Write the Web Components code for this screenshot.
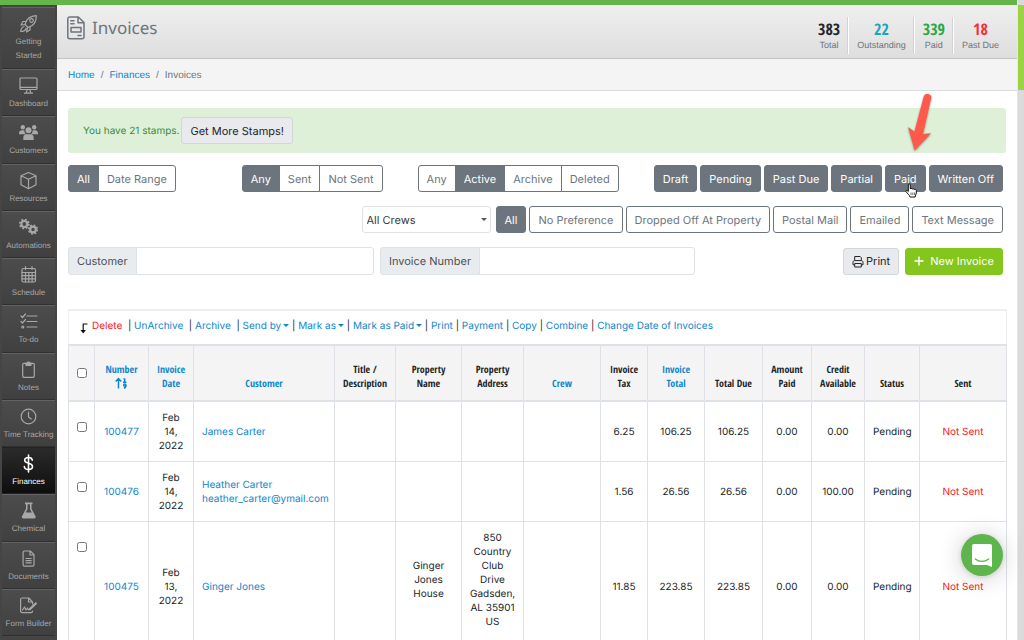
<!DOCTYPE html>
<html lang="en">
<head>
<meta charset="utf-8">
<meta name="viewport" content="width=device-width, initial-scale=1">
<title>Invoices</title>
<style>
body {
    margin: 0;
    height: 100vh;
    overflow: hidden;
    background: #fff;
    font-family: Inter, "Liberation Sans", sans-serif;
    font-size: 10px;
    line-height: 14px;
    text-rendering: geometricPrecision;
    color: #212529;
    --blue: #0f86cc;
    --gray: #6c757d;
    --line: #dee2e6;
    --narrow: "Liberation Sans Narrow", "Open Sans Condensed", "Liberation Sans", sans-serif;
}
</style>
</head>
<body>
<app-container></app-container>
<script>
const stroke = 'fill="none" stroke="currentColor" stroke-width="1.2" stroke-linecap="round" stroke-linejoin="round"';
const icons = {
    rocket: `<g ${stroke}><path d="M6 10.5C7 6 10.500 2 17.300 1.700 17.500 8 14 12 9 13.500z"/><circle cx="12.500" cy="6.500" r="1.800"/><path d="M7 7.500H4L2 11l4-.5M11 12.500V16l-3.500 2 1-4.500M5 12.500c-2 .5-3 2-3.300 5C4.500 17.500 6.500 16.500 7 14.500"/></g>`,
    monitor: `<g ${stroke}><rect x="1" y="2" width="17" height="11.500" rx="1"/><path d="M1.500 11.300h16M8 13.500l-.6 3.500M11 13.500l.6 3.500M5.500 17.200h8"/></g>`,
    users: `<g fill="currentColor"><circle cx="3.800" cy="4.300" r="2.200"/><circle cx="15.200" cy="4.300" r="2.200"/><circle cx="9.500" cy="7.300" r="3"/><path d="M0 10.500C0 8.300 1.300 7.300 3 7.300h2.300c0 2 .6 3 1.700 3.900H0zM19 10.500c0-2.200-1.300-3.200-3-3.200h-2.300c0 2-.6 3-1.700 3.900h7zM4.300 17v-2.300c0-2.300 1.200-3.500 3-3.500h4.400c1.800 0 3 1.200 3 3.500V17z"/></g>`,
    cube: `<g ${stroke}><path d="M9.500 1.500 17 4.700v9L9.500 17.700 2 13.700v-9zM2 4.800l7.500 3.500L17 4.800M9.500 8.300v9.300"/></g>`,
    gears: `<g fill="none" stroke="currentColor"><circle cx="5.300" cy="6" r="3" stroke-width="2.200"/><circle cx="5.300" cy="6" r="4.600" stroke-width="1.500" stroke-dasharray="1.900 1.713"/><circle cx="14" cy="11.500" r="2.800" stroke-width="2.200"/><circle cx="14" cy="11.500" r="4.400" stroke-width="1.500" stroke-dasharray="1.800 1.656"/></g>`,
    calendar: `<g ${stroke}><rect x="3" y="3.500" width="13.500" height="13.500" rx="1.500"/><path d="M3 7.500h13.500M3 10.700h13.500M3 13.900h13.500M6.500 7.500V17M9.800 7.500V17M13.100 7.500V17M6.500 1.500v3M13 1.500v3"/></g>`,
    tasks: `<g ${stroke}><path d="M8 4h10M8 9.500h10M8 15h10M2 4l1.500 1.500L6.500 2M2 9.500 3.500 11l3-3.500"/><circle cx="3.800" cy="15" r="1"/></g>`,
    clipboard: `<g ${stroke}><path d="M7 3.300H5A1.300 1.300 0 0 0 3.700 4.600v11.500A1.300 1.300 0 0 0 5 17.400h9a1.300 1.300 0 0 0 1.300-1.300V4.600A1.300 1.300 0 0 0 14 3.300h-2"/><path d="M7 5.300V3h1.200a1.400 1.400 0 0 1 2.600 0H12v2.300z" fill="currentColor"/></g>`,
    clock: `<g ${stroke}><circle cx="9.500" cy="9.500" r="7.300"/><path d="M9.500 5v5l2.800 2"/></g>`,
    dollar: `<path d="M13.300 6.200C13 4.300 11.600 3.500 9.500 3.500 7.200 3.500 5.700 4.600 5.700 6.300c0 4 7.800 2 7.800 6.200 0 1.900-1.700 3-4 3-2.400 0-4-1-4.200-3M9.500 1v17" fill="none" stroke="currentColor" stroke-width="1.600" stroke-linecap="round"/>`,
    flask: `<path d="M6 1.500h7.500v1.700h-1v4.500l4 7.500c.6 1.200 0 2.300-1.300 2.300H4.300c-1.300 0-1.900-1.100-1.300-2.300l4-7.500V3.200H6zM8.500 3.200v5l-1.800 3.300h6.100L11 8.200v-5z" fill="currentColor" fill-rule="evenodd"/>`,
    file: `<g ${stroke}><path d="M5.500 2h5.800L15 5.700v10.100a1.400 1.400 0 0 1-1.400 1.400H5.500a1.400 1.400 0 0 1-1.400-1.400V3.400A1.400 1.400 0 0 1 5.500 2zM11 2v4h4M7 9.500h5.200M7 11.700h5.200M7 13.900h5.200"/></g>`,
    form: `<g ${stroke}><path d="M13.500 8V6L9.800 2H3a1.400 1.400 0 0 0-1.400 1.400v11.800A1.400 1.400 0 0 0 3 16.600h9.100a1.400 1.400 0 0 0 1.400-1.400M9.500 2v4h3.800"/><path d="M3.500 14l2-3 1.500 3 1.500-2 .8 1.700h1.500"/></g><path d="M11 13l5.800-5.500" stroke="currentColor" stroke-width="2.400" stroke-linecap="round"/>`,
    invoice: `<svg width="18" height="24" viewBox="0 0 18 24"><g fill="none" stroke="currentColor" stroke-width="1.500" stroke-linecap="round" stroke-linejoin="round"><path d="M2.800 1h8.500L17 6.500v14.200a2 2 0 0 1-2 2H2.800a2 2 0 0 1-2-2V3a2 2 0 0 1 2-2zM11 1v5.800h6M3.800 4.700H7M3.800 7.800H7M11 19.500h3"/><rect x="4" y="11.500" width="10" height="4.500"/></g></svg>`,
    print: `<svg width="12" height="13" viewBox="0 0 12 13"><g fill="none" stroke="currentColor" stroke-linejoin="round"><path d="M2.700 5.500v-4h5.500l1.100 1.200v2.800M2.700 9.800H1V7.200c0-.9.700-1.600 1.600-1.600h6.800c.9 0 1.600.7 1.600 1.600v2.600H9.300"/><rect x="2.700" y="8.500" width="6.600" height="3.500"/></g></svg>`,
    plus: `<svg width="10" height="10" viewBox="0 0 10 10"><path d="M5 .5v9M.5 5h9" stroke="currentColor" stroke-width="1.400"/></svg>`,
    down: `<svg width="8" height="11" viewBox="0 0 8 11"><path d="M7.500 1H3.200v7" fill="none" stroke="#111" stroke-width="1.200"/><path d="M.5 7h5.400L3.200 10.500z" fill="#111"/></svg>`,
    sort: `<svg width="13" height="12" viewBox="0 0 13 12"><g fill="none" stroke="currentColor" stroke-width="1.500"><path d="M3.500 11.500V2M.7 4.500l2.800-3 2.800 3M8.500 2h1.200v3.500M8 5.300h3.500"/><circle cx="9.800" cy="8" r="1.100"/><path d="M10.900 8c0 2-.6 3-2 3.300"/></g></svg>`
};

class NavItem extends HTMLElement {
    constructor() {
        super();
        this.attachShadow({ mode: 'open' })
    }
    connectedCallback() {
        this.shadowRoot.innerHTML = `
        <style>
            :host {
                display: flex;
                flex: 1 1 0;
                margin: 0 2px;
                border-top: 1px solid #636363;
                border-bottom: 1px solid #303030;
                background: linear-gradient(#4c4c4c, #404040);
                color: #a8a8a8;
            }
            :host([wide]) { flex: 0 0 60px; }
            :host([active]) {
                background: linear-gradient(#2b2b2b, #0e0e0e);
                border-color: #222;
                color: #fff;
            }
            a {
                flex: 1;
                display: flex;
                flex-direction: column;
                align-items: center;
                padding-top: 6px;
                color: inherit;
                text-decoration: none;
                text-align: center;
                font: 8px/14px "Liberation Sans", sans-serif;
            }
            svg { width: 19px; height: 19px; margin-bottom: 2px; }
        </style>
        <a href="#"><svg viewBox="0 0 19 19">${icons[this.getAttribute('icon')]}</svg><slot></slot></a>
        `
    }
}
customElements.define('nav-item', NavItem)

class SideNav extends HTMLElement {
    constructor() {
        super();
        this.attachShadow({ mode: 'open' })
    }
    connectedCallback() {
        this.shadowRoot.innerHTML = `
        <style>
            :host { display: flex; background: #454545; }
            nav {
                flex: 1;
                display: flex;
                flex-direction: column;
                padding: 2px 0 4px;
            }
        </style>
        <nav>
            <nav-item icon="rocket" wide>Getting<br>Started</nav-item>
            <nav-item icon="monitor">Dashboard</nav-item>
            <nav-item icon="users">Customers</nav-item>
            <nav-item icon="cube">Resources</nav-item>
            <nav-item icon="gears">Automations</nav-item>
            <nav-item icon="calendar">Schedule</nav-item>
            <nav-item icon="tasks">To-do</nav-item>
            <nav-item icon="clipboard">Notes</nav-item>
            <nav-item icon="clock">Time Tracking</nav-item>
            <nav-item icon="dollar" active>Finances</nav-item>
            <nav-item icon="flask">Chemical</nav-item>
            <nav-item icon="file">Documents</nav-item>
            <nav-item icon="form">Form Builder</nav-item>
        </nav>
        `
    }
}
customElements.define('side-nav', SideNav)

class StatItem extends HTMLElement {
    constructor() {
        super();
        this.attachShadow({ mode: 'open' })
    }
    connectedCallback() {
        this.shadowRoot.innerHTML = `
        <style>
            :host {
                display: block;
                padding: 3px 8px 0;
                height: 34px;
                border-left: 1px solid #fff;
                box-shadow: -1px 0 #d2d2d2;
                text-align: center;
                font: 9px/12px "Liberation Sans", sans-serif;
            }
            :host(:first-child) { border: 0; box-shadow: none; }
            b {
                display: block;
                font: bold 16px/19px var(--narrow);
                color: var(--tone, #212529);
            }
            span { color: var(--gray); }
        </style>
        <b>${this.getAttribute('value')}</b><span><slot></slot></span>
        `
    }
}
customElements.define('stat-item', StatItem)

class PageHeader extends HTMLElement {
    constructor() {
        super();
        this.attachShadow({ mode: 'open' })
    }
    connectedCallback() {
        this.shadowRoot.innerHTML = `
        <style>
            :host { display: block; }
            header {
                display: flex;
                justify-content: space-between;
                height: 53px;
                padding: 0 10px;
                border-bottom: 1px solid #c4c4c4;
                background: linear-gradient(#efefef, #dedede);
            }
            h1 {
                display: flex;
                gap: 7px;
                margin: 11px 0 0;
                height: 24px;
                font: 17px/24px "Noto Sans", sans-serif;
                color: var(--gray);
            }
            .stats { display: flex; padding-top: 12px; }
            ol {
                display: flex;
                margin: 0;
                padding: 10px 11px 7px;
                list-style: none;
                border-bottom: 1px solid #dcdcdc;
                background: #f4f4f4;
                font: 10px/14px "Liberation Sans", sans-serif;
                color: var(--gray);
            }
            li + li::before { content: "/"; padding: 0 6px; }
            a { color: var(--blue); text-decoration: none; }
        </style>
        <header>
            <h1>${icons.invoice}<span>Invoices</span></h1>
            <div class="stats">
                <stat-item value="383">Total</stat-item>
                <stat-item value="22" style="--tone: #1ba5b8">Outstanding</stat-item>
                <stat-item value="339" style="--tone: #28a745">Paid</stat-item>
                <stat-item value="18" style="--tone: #ee3235">Past Due</stat-item>
            </div>
        </header>
        <ol>
            <li><a href="#">Home</a></li>
            <li><a href="#">Finances</a></li>
            <li>Invoices</li>
        </ol>
        `
    }
}
customElements.define('page-header', PageHeader)

class AppButton extends HTMLElement {
    constructor() {
        super();
        this.attachShadow({ mode: 'open' })
    }
    connectedCallback() {
        this.shadowRoot.innerHTML = `
        <style>
            :host { display: inline-flex; --bg: #fff; --fg: var(--gray); --edge: var(--gray); }
            :host([on]) { --bg: #6c757d; --fg: #fff; }
            :host([kind="light"]) { --bg: #e9eaed; --fg: #212529; --edge: #d3d6da; }
            :host([kind="new"]) { --bg: #84c61d; --fg: #fff; --edge: #84c61d; }
            button {
                display: flex;
                align-items: center;
                gap: var(--icon-gap, 2px);
                height: 27px;
                padding: 0 8px;
                border: 1px solid var(--edge);
                border-radius: var(--corners, 3px);
                background: var(--bg);
                color: var(--fg);
                font: 11px/16px Inter, sans-serif;
                text-rendering: inherit;
                white-space: nowrap;
            }
        </style>
        <button type="button">${icons[this.getAttribute('icon')] || ''}<slot></slot></button>
        `
    }
}
customElements.define('app-button', AppButton)

class ButtonGroup extends HTMLElement {
    constructor() {
        super();
        this.attachShadow({ mode: 'open' })
    }
    connectedCallback() {
        this.shadowRoot.innerHTML = `
        <style>
            :host { display: flex; gap: 3px; }
            :host([joined]) { gap: 0; }
            :host([joined]) ::slotted(*) { --corners: 0; }
            :host([joined]) ::slotted(:not(:first-child)) { margin-left: -1px; }
            :host([joined]) ::slotted(:first-child) { --corners: 3px 0 0 3px; }
            :host([joined]) ::slotted(:last-child) { --corners: 0 3px 3px 0; }
        </style>
        <slot></slot>
        `
    }
}
customElements.define('button-group', ButtonGroup)

class LabeledInput extends HTMLElement {
    constructor() {
        super();
        this.attachShadow({ mode: 'open' })
    }
    connectedCallback() {
        this.shadowRoot.innerHTML = `
        <style>
            :host { display: flex; font-size: 11px; color: #495057; }
            label {
                padding: 0 8px;
                border: 1px solid var(--line);
                border-radius: 3px 0 0 3px;
                background: #e9ecef;
                line-height: 26px;
                white-space: nowrap;
            }
            input {
                flex: 1;
                min-width: 0;
                box-sizing: border-box;
                height: 28px;
                margin-left: -1px;
                border: 1px solid var(--line);
                border-radius: 0 3px 3px 0;
                font: inherit;
            }
        </style>
        <label for="field"><slot></slot></label><input id="field" type="text">
        `
    }
}
customElements.define('labeled-input', LabeledInput)

class PointerHint extends HTMLElement {
    constructor() {
        super();
        this.attachShadow({ mode: 'open' })
    }
    connectedCallback() {
        this.shadowRoot.innerHTML = `
        <style>
            :host { position: relative; display: flex; }
            svg { position: absolute; pointer-events: none; }
            .arrow { left: 20px; bottom: 38px; filter: drop-shadow(0 1px 1px #0006); }
            .hand { left: 20px; top: 18px; }
        </style>
        <slot></slot>
        <svg class="arrow" width="30" height="62" viewBox="0 0 30 62"><path d="M18.600 5A3.800 3.800 0 0 1 26.100 6.500L18 42l8-.7L9.700 58.500 3 35l6.500 4.500z" fill="#ff594c"/></svg>
        <svg class="hand" width="13" height="15" viewBox="0 0 13 15"><path d="M3.300 8.500V2c0-1.400 2-1.400 2 0v4c.3-.9 1.800-.8 2 .2.500-.7 1.800-.5 2 .4.700-.6 2-.2 2 .9v2.500c0 1.500-1 2.300-1.200 4H5C4.500 12 2.500 10.500 1 8.700c-.6-1 .6-1.700 1.400-1z" fill="#fff" stroke="#111"/><path d="M6 9.500v2.500M7.800 9.500v2.500M9.500 9.500v2.500" stroke="#333" stroke-width=".7"/></svg>
        `
    }
}
customElements.define('pointer-hint', PointerHint)

class InvoiceFilters extends HTMLElement {
    constructor() {
        super();
        this.attachShadow({ mode: 'open' })
    }
    connectedCallback() {
        this.shadowRoot.innerHTML = `
        <style>
            :host { display: flex; flex-direction: column; gap: 14px; padding: 12px 4px 0 0; }
            .row { display: flex; align-items: center; justify-content: flex-end; }
            .status { gap: 35px; }
            .status > :first-child { margin-right: auto; }
            .crew { gap: 5px; }
            .search { gap: 6px; }
            .search > :first-child { flex: 0 1 306px; }
            .search > :nth-child(2) { flex: 0 1 315px; margin-right: auto; }
            .select { display: grid; align-items: center; width: 129px; }
            .select::after {
                content: "";
                grid-area: 1 / 1;
                justify-self: end;
                margin-right: 4px;
                border: 3px solid transparent;
                border-top-color: #555;
                border-bottom: 0;
                pointer-events: none;
            }
            select {
                grid-area: 1 / 1;
                appearance: none;
                height: 27px;
                padding: 0 4px;
                border: 1px solid var(--line);
                border-radius: 3px;
                background: #fff;
                color: #343a40;
                font: 11px/16px Inter, sans-serif;
                text-rendering: inherit;
            }
        </style>
        <div class="row status">
            <button-group joined>
                <app-button on>All</app-button>
                <app-button>Date Range</app-button>
            </button-group>
            <button-group joined>
                <app-button on>Any</app-button>
                <app-button>Sent</app-button>
                <app-button>Not Sent</app-button>
            </button-group>
            <button-group joined>
                <app-button>Any</app-button>
                <app-button on>Active</app-button>
                <app-button>Archive</app-button>
                <app-button>Deleted</app-button>
            </button-group>
            <button-group>
                <app-button on>Draft</app-button>
                <app-button on>Pending</app-button>
                <app-button on>Past Due</app-button>
                <app-button on>Partial</app-button>
                <pointer-hint><app-button on>Paid</app-button></pointer-hint>
                <app-button on>Written Off</app-button>
            </button-group>
        </div>
        <div class="row crew">
            <div class="select"><select aria-label="Crew"><option>All Crews</option></select></div>
            <button-group>
                <app-button on>All</app-button>
                <app-button>No Preference</app-button>
                <app-button>Dropped Off At Property</app-button>
                <app-button>Postal Mail</app-button>
                <app-button>Emailed</app-button>
                <app-button>Text Message</app-button>
            </button-group>
        </div>
        <div class="row search">
            <labeled-input>Customer</labeled-input>
            <labeled-input>Invoice Number</labeled-input>
            <app-button kind="light" icon="print">Print</app-button>
            <app-button kind="new" icon="plus" style="--icon-gap: 6px">New Invoice</app-button>
        </div>
        `
    }
}
customElements.define('invoice-filters', InvoiceFilters)

class StampAlert extends HTMLElement {
    constructor() {
        super();
        this.attachShadow({ mode: 'open' })
    }
    connectedCallback() {
        this.shadowRoot.innerHTML = `
        <style>
            :host {
                display: flex;
                align-items: center;
                gap: 2px;
                margin-right: 1px;
                padding: 9px 15px;
                border-radius: 3px;
                background: #dff0d8;
                color: #3c8a3f;
            }
        </style>
        <span>You have 21 stamps.</span>
        <app-button kind="light">Get More Stamps!</app-button>
        `
    }
}
customElements.define('stamp-alert', StampAlert)

const columns = [
    { text: 'Number', width: 54, link: true, icon: 'sort' },
    { text: 'Invoice Date', width: 45, link: true },
    { text: 'Customer', link: true },
    { text: 'Title / Description', width: 61 },
    { text: 'Property Name', width: 66 },
    { text: 'Property Address', width: 62 },
    { text: 'Crew', width: 77, link: true },
    { text: 'Invoice Tax', width: 47 },
    { text: 'Invoice Total', width: 57, link: true },
    { text: 'Total Due', width: 58 },
    { text: 'Amount Paid', width: 49 },
    { text: 'Credit Available', width: 53 },
    { text: 'Status', width: 55 },
    { text: 'Sent', width: 87 }
];
const rows = [
    ['100477', 'Feb 14, 2022', ['James Carter'], '', '', '', '', '6.25', '106.25', '106.25', '0.00', '0.00', 'Pending', 'Not Sent'],
    ['100476', 'Feb 14, 2022', ['Heather Carter', 'heather_carter@ymail.com'], '', '', '', '', '1.56', '26.56', '26.56', '0.00', '100.00', 'Pending', 'Not Sent'],
    ['100475', 'Feb 13, 2022', ['Ginger Jones'], '', 'Ginger Jones House<br><br>', '850 Country Club Drive Gadsden, AL 35901 US<br><br>', '', '11.85', '223.85', '223.85', '0.00', '0.00', 'Pending', 'Not Sent']
];

class InvoiceTable extends HTMLElement {
    constructor() {
        super();
        this.attachShadow({ mode: 'open' })
    }
    cell(value, i) {
        if (i === 0) return `<td><a href="#">${value}</a></td>`
        if (i === 1) return `<td class="date">${value}</td>`
        if (i === 2) return `<td class="customer">${value.map(v => `<a href="#">${v}</a>`).join('<br>')}</td>`
        if (i === 13) return `<td class="red">${value}</td>`
        return `<td>${value}</td>`
    }
    connectedCallback() {
        this.shadowRoot.innerHTML = `
        <style>
            :host { display: block; margin-top: 34px; }
            a { color: var(--blue); text-decoration: none; }
            .red, a.red { color: #f8161b; }
            .actions {
                display: flex;
                height: 33px;
                padding: 0 13px;
                border: 1px solid #eee;
                border-top-width: 2px;
                border-bottom: 0;
                line-height: 31px;
                white-space: pre;
            }
            .actions svg { margin: 12px 4px 0 -2px; }
            .caret {
                display: inline-block;
                margin: 0 0 2px 2px;
                border: 3px solid transparent;
                border-top-color: var(--blue);
                border-bottom: 0;
            }
            table {
                width: 100%;
                table-layout: fixed;
                border-collapse: collapse;
                text-align: center;
            }
            th, td { border: 1px solid var(--line); }
            th {
                height: 44px;
                padding: 0 6px 10px;
                border-top: 2px solid var(--line);
                border-bottom: 2px solid var(--line);
                background: #f4f4f4;
                vertical-align: bottom;
                font: bold 10px/14px var(--narrow);
            }
            th.check { vertical-align: middle; padding: 0; }
            th svg { display: block; margin: 1px auto; }
            td { height: 42px; padding: 9px 8px 8px; }
            td.check { vertical-align: top; padding: 20px 0 0; height: auto; }
            td.date { padding: 9px 6px 8px; }
            td.customer { text-align: left; white-space: nowrap; }
            .check input {
                display: block;
                width: 10px;
                height: 10px;
                margin: 0 auto;
            }
        </style>
        <div class="actions">${icons.down}<span><a class="red" href="#">Delete</a>  | <a href="#">UnArchive</a>  | <a href="#">Archive</a>  | <a href="#">Send by<i class="caret"></i></a> | <a href="#">Mark as<i class="caret"></i></a> | <a href="#">Mark as Paid<i class="caret"></i></a> | <a href="#">Print</a> | <a href="#">Payment</a> | <a href="#">Copy</a> | <a href="#">Combine</a> | <a href="#">Change Date of Invoices</a></span></div>
        <table>
            <colgroup>
                <col style="width: 26px">
                ${columns.map(c => `<col${c.width ? ` style="width: ${c.width}px"` : ''}>`).join('')}
            </colgroup>
            <thead><tr>
                <th class="check"><input type="checkbox" aria-label="Select all"></th>
                ${columns.map(c => `<th>${c.link ? `<a href="#">${c.text}${c.icon ? icons[c.icon] : ''}</a>` : c.text}</th>`).join('')}
            </tr></thead>
            <tbody>
                ${rows.map(r => `<tr><td class="check"><input type="checkbox" aria-label="Select ${r[0]}"></td>${r.map(this.cell).join('')}</tr>`).join('')}
            </tbody>
        </table>
        `
    }
}
customElements.define('invoice-table', InvoiceTable)

class ChatLauncher extends HTMLElement {
    constructor() {
        super();
        this.attachShadow({ mode: 'open' })
    }
    connectedCallback() {
        this.shadowRoot.innerHTML = `
        <style>
            :host { position: fixed; right: 21px; bottom: 64px; }
            button {
                display: grid;
                place-items: center;
                width: 42px;
                height: 42px;
                padding: 0;
                border: 0;
                border-radius: 50%;
                background: #5db54b;
                box-shadow: 0 1px 5px #0002, 0 2px 24px #0003;
            }
        </style>
        <button type="button" aria-label="Chat"><svg width="20" height="23" viewBox="0 0 20 23"><path d="M2 0h16a2 2 0 0 1 2 2v21l-5-2H2a2 2 0 0 1-2-2V2a2 2 0 0 1 2-2z" fill="#fff"/><path d="M3.300 15c4 3.200 9.400 3.200 13.400 0" fill="none" stroke="#5db54b" stroke-width="1.300" stroke-linecap="round"/></svg></button>
        `
    }
}
customElements.define('chat-launcher', ChatLauncher)

class App extends HTMLElement {
    constructor() {
        super();
        this.attachShadow({ mode: 'open' })
    }
    connectedCallback() {
        this.render();
    }

    render() {
        this.shadowRoot.innerHTML = `
        <style>
            :host {
                display: grid;
                grid-template: 5px 1fr / 57px minmax(0, 1fr) 7px;
                height: 100vh;
            }
            .bar { grid-column: 1 / 3; background: #65b54a; }
            .scroll {
                grid-area: 1 / 3 / 3 / 4;
                padding-top: 5px;
                border-left: 1px solid #e8e8e8;
                background: #dadada;
            }
            .thumb { height: 85px; background: #9bd344; }
            main { min-height: 0; overflow: hidden; }
            .content { padding: 17px 10px 0 11px; }
        </style>
        <div class="bar"></div>
        <div class="scroll"><div class="thumb"></div></div>
        <side-nav></side-nav>
        <main>
            <page-header></page-header>
            <div class="content">
                <stamp-alert></stamp-alert>
                <invoice-filters></invoice-filters>
                <invoice-table></invoice-table>
            </div>
        </main>
        <chat-launcher></chat-launcher>
        `
    }
}
customElements.define('app-container', App)
</script>
</body>
</html>
